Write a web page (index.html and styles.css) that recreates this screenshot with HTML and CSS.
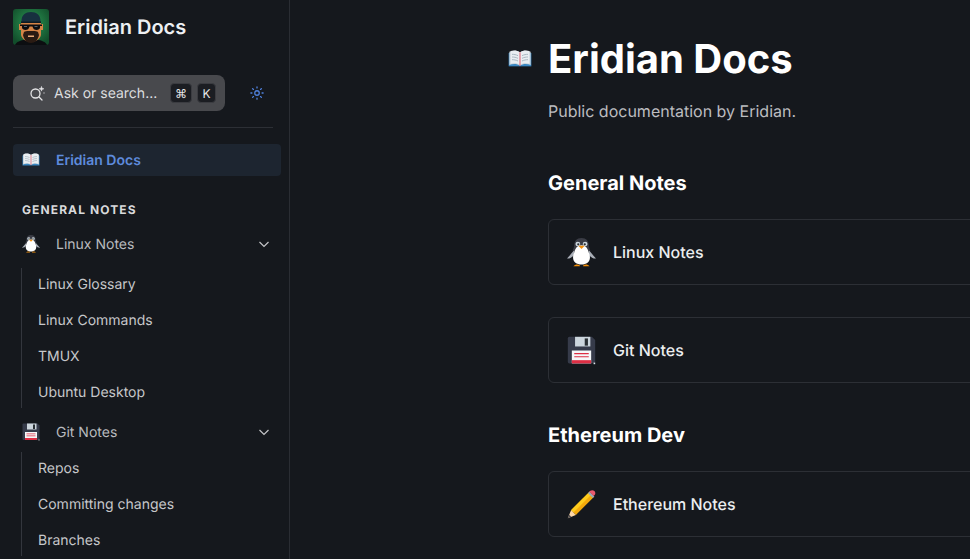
FILE: index.html
```html
<!DOCTYPE html>
<html lang="en">
<head>
  <meta charset="UTF-8" />
  <meta name="viewport" content="width=device-width, initial-scale=1.0" />
  <title>Eridian Docs</title>
  <link rel="stylesheet" href="styles.css">
</head>
<body>
  <svg class="sprites" width="0" height="0" aria-hidden="true">
    <symbol id="book" viewBox="0 0 36 36">
      <path d="M1 9h34v20H1z" fill="#3b88c3"/>
      <path d="M2 7c5-2 12-2 16 1 4-3 11-3 16-1v20c-5-2-12-2-16 1-4-3-11-3-16-1z" fill="#ccd6dd"/>
      <path d="M4 6c5-1.500 10-1 14 2v19c-4-3-9-3.500-14-2zM32 6c-5-1.500-10-1-14 2v19c4-3 9-3.500 14-2z" fill="#e9eef2"/>
      <path d="M6 11c3 0 6 .5 9 2M6 15c3 0 6 .5 9 2M6 19c3 0 6 .5 9 2M30 11c-3 0-6 .5-9 2M30 15c-3 0-6 .5-9 2M30 19c-3 0-6 .5-9 2" stroke="#99aab5" stroke-width="1.200" fill="none"/>
      <path d="M17.300 8h1.400v20h-1.400z" fill="#dd5566"/>
    </symbol>
    <symbol id="penguin" viewBox="0 0 36 36">
      <path d="M9 15C6 19 3 22 0 25.500c2.500.5 6-1.500 9-4.500zM27 15c3 4 6 7 9 10.500-2.500.5-6-1.500-9-4.500z" fill="#a9aeb7"/>
      <path d="M18 0c-6 0-9 4-9 9 0 2-1 4-2 7h22c-1-3-2-5-2-7 0-5-3-9-9-9z" fill="#3a3c45"/>
      <path d="M18 9c-5 0-8 4-9 9-1 2-1.500 4-1.500 6 0 6 4.500 9 10.500 9s10.500-3 10.500-9c0-2-.5-4-1.500-6-1-5-4-9-9-9z" fill="#fff"/>
      <ellipse cx="13.500" cy="7.500" rx="3" ry="2.800" fill="#ccd6dd"/>
      <ellipse cx="22.500" cy="7.500" rx="3" ry="2.800" fill="#ccd6dd"/>
      <circle cx="14" cy="7.800" r="1.400" fill="#292f33"/>
      <circle cx="22" cy="7.800" r="1.400" fill="#292f33"/>
      <path d="M14 9.500h8L18 13.500z" fill="#f4900c"/>
      <path d="M8 35c2-2.500 6-2.500 8-1v1zM28 35c-2-2.500-6-2.500-8-1v1z" fill="#f4900c"/>
    </symbol>
    <symbol id="floppy" viewBox="0 0 36 36">
      <path d="M3 1h28l4 4v28l-5 1H3a2 2 0 0 1-2-2V3a2 2 0 0 1 2-2z" fill="#363b4a"/>
      <path d="M10 1h19v12H10z" fill="#ccd6dd"/>
      <path d="M22 3h4v9h-4z" fill="#292f33"/>
      <path d="M6 18h24v16H6z" fill="#f5f8fa"/>
      <path d="M9 21h18v1.500H9zM9 25h18v1.500H9z" fill="#dd2e44"/>
      <path d="M6 30h24v4H6z" fill="#dd2e44"/>
      <path d="M33 33h2v2h-2z" fill="#e1e8ed"/>
    </symbol>
    <symbol id="pencil" viewBox="0 0 36 36">
      <path d="M5 25 27 3l6 6-22 22z" fill="#f4a90c"/>
      <path d="M5 25 27 3l3 3L8 28z" fill="#ffcc1d"/>
      <path d="m1 35 4-10 6 6z" fill="#ffd8a8"/>
      <path d="m1 35 1.700-4.300 2.600 2.600z" fill="#4a4a50"/>
      <path d="m26 4 2-2 6 6-2 2z" fill="#99aab5"/>
      <path d="M29 1c1.500-1.300 3.700-1 5 .3 1.400 1.400 1.600 3.500.3 5L33 7.500 27.500 2z" fill="#ea596e"/>
    </symbol>
    <radialGradient id="avatar-bg" cx="50%" cy="40%" r="65%">
      <stop offset="0" stop-color="#2c9a55"/>
      <stop offset="1" stop-color="#124d2b"/>
    </radialGradient>
  </svg>

  <aside class="sidebar">
    <div class="brand">
      <svg class="avatar" viewBox="0 0 36 36" aria-label="Eridian logo">
        <rect width="36" height="36" rx="3" fill="url(#avatar-bg)"/>
        <path d="M2 36c1-3 6-5 10-5h12c4 0 9 2 10 5z" fill="#0c0e11"/>
        <path d="M6 15h2v-2h20v2h2v6h-2v5c-1 4-5 7-10 7s-9-3-10-7v-5H6z" fill="#d48446"/>
        <path d="M11 23c2-1.500 5-1 7-1s5-.5 7 1l1 3c-1 5-4 8-8 8s-7-3-8-8z" fill="#2a1b13"/>
        <path d="M15 26.500h6v1.500h-6z" fill="#e8ab78"/>
        <path d="M8.500 12c0-6 4-9 9.500-9s9.500 3 9.500 9l.5 2H8z" fill="#17303f"/>
        <path d="M8 12.500h20V14H8z" fill="#0d1a23"/>
        <path d="M7 15.500h22v1.500h-2v1.500c0 1.500-1.500 2.500-3.500 2.500s-3.500-1-4-3.500h-3c-.5 2.500-2 3.500-4 3.500S9 20 9 18.500V17H7z" fill="#0b0d10"/>
        <path d="M11 17h3v1h-3zM21.500 17h3v1h-3z" fill="#57606a"/>
      </svg>
      <span class="brand-name">Eridian Docs</span>
    </div>

    <div class="tools">
      <button class="search" type="button">
        <svg class="search-icon" viewBox="0 0 16 16" fill="none" stroke="#e4e4e6" stroke-width="1.300">
          <circle cx="6.500" cy="8.500" r="4.500"/>
          <path d="m10 12 3 3" stroke-linecap="round"/>
          <path d="M12.500 1.500c.2 1.500.8 2.100 2.300 2.300-1.500.2-2.100.8-2.300 2.300-.2-1.500-.8-2.100-2.300-2.300 1.500-.2 2.100-.8 2.300-2.300zM15 7.200v1.600" fill="#e4e4e6" stroke-width=".7"/>
        </svg>
        <span class="search-text">Ask or search...</span>
        <span class="key key-cmd">⌘</span>
        <span class="key">K</span>
      </button>
      <svg class="sun" viewBox="0 0 16 16" fill="none" stroke="#4f80dc" stroke-width="1.500" stroke-linecap="round">
        <circle cx="8" cy="8" r="2.600"/>
        <path d="M8 1v1.200M8 13.800V15M1 8h1.200M13.800 8H15M3 3l.9.9M12.100 12.100l.9.9M3 13l.9-.9M12.100 3.900l.9-.9"/>
      </svg>
    </div>

    <hr class="divider">

    <a class="nav-active">
      <svg class="nav-emoji"><use href="#book"/></svg>
      <span>Eridian Docs</span>
    </a>

    <h4 class="nav-heading">General Notes</h4>

    <a class="nav-item">
      <svg class="nav-emoji"><use href="#penguin"/></svg>
      <span class="nav-label">Linux Notes</span>
      <svg class="chevron" viewBox="0 0 12 12" fill="none" stroke="#c4c5c8" stroke-width="1.200"><path d="m1.500 4 4.500 4.500L10.500 4"/></svg>
    </a>
    <div class="sub-list">
      <a>Linux Glossary</a>
      <a>Linux Commands</a>
      <a>TMUX</a>
      <a>Ubuntu Desktop</a>
    </div>

    <a class="nav-item">
      <svg class="nav-emoji"><use href="#floppy"/></svg>
      <span class="nav-label">Git Notes</span>
      <svg class="chevron" viewBox="0 0 12 12" fill="none" stroke="#c4c5c8" stroke-width="1.200"><path d="m1.500 4 4.500 4.500L10.500 4"/></svg>
    </a>
    <div class="sub-list">
      <a>Repos</a>
      <a>Committing changes</a>
      <a>Branches</a>
    </div>
  </aside>

  <main class="content">
    <div class="title-row">
      <svg class="title-emoji"><use href="#book"/></svg>
      <h1>Eridian Docs</h1>
    </div>
    <p class="lead">Public documentation by Eridian.</p>

    <h2>General Notes</h2>
    <a class="card">
      <svg class="card-emoji"><use href="#penguin"/></svg>
      <span>Linux Notes</span>
    </a>
    <a class="card">
      <svg class="card-emoji"><use href="#floppy"/></svg>
      <span>Git Notes</span>
    </a>

    <h2>Ethereum Dev</h2>
    <a class="card">
      <svg class="card-emoji"><use href="#pencil"/></svg>
      <span>Ethereum Notes</span>
    </a>
  </main>
</body>
</html>
```

FILE: styles.css
```css
html, body {
  height: 100%;
}
body {
  margin: 0;
  display: flex;
  overflow: hidden;
  background: #15181d;
  color: #fff;
  font-family: 'Inter', sans-serif;
  text-rendering: geometricPrecision;
}
.sprites {
  position: absolute;
}
.sidebar {
  flex: none;
  box-sizing: border-box;
  width: 290px;
  height: 100%;
  padding: 9px 8px 0 13px;
  border-right: 1px solid #2a2d33;
  overflow: hidden;
}
.brand {
  display: flex;
  align-items: center;
  gap: 16px;
  height: 36px;
}
.avatar {
  width: 36px;
  height: 36px;
}
.brand-name {
  font-size: 20px;
  font-weight: 600;
  color: #edf0f3;
}
.tools {
  display: flex;
  align-items: center;
  margin-top: 30px;
}
.search {
  display: flex;
  align-items: center;
  width: 212px;
  height: 36px;
  padding: 0 9px 0 16px;
  box-sizing: border-box;
  border: none;
  border-radius: 8px;
  background: #48494d;
  color: #dcdddf;
  font-family: inherit;
  font-size: 14px;
  text-rendering: inherit;
}
.search-icon {
  width: 16px;
  height: 16px;
  margin-right: 9px;
}
.search-text {
  flex: 1;
  text-align: left;
}
.key {
  display: flex;
  align-items: center;
  justify-content: center;
  width: 19px;
  height: 20px;
  margin-left: 5px;
  border-radius: 4px;
  border: 1px solid #3b3c41;
  box-sizing: border-box;
  background: #1b1d22;
  color: #e6e6e8;
  font-size: 12px;
}
.key-cmd {
  width: 22px;
}
.sun {
  width: 14px;
  height: 14px;
  margin-left: 25px;
}
.divider {
  width: 260px;
  height: 1px;
  margin: 16px 0;
  border: none;
  background: #2c2f35;
}
.nav-active {
  display: flex;
  align-items: center;
  height: 32px;
  padding-left: 9px;
  border-radius: 4px;
  background: #1d2530;
  color: #5e8bdc;
  font-size: 14px;
  font-weight: 600;
}
.nav-emoji {
  flex: none;
  width: 18px;
  height: 18px;
  margin-right: 16px;
}
.nav-heading {
  margin: 28px 0 12px 9px;
  height: 12px;
  line-height: 12px;
  font-size: 12px;
  font-weight: 700;
  letter-spacing: 1.100px;
  text-transform: uppercase;
  color: #d9dadc;
}
.nav-item {
  display: flex;
  align-items: center;
  height: 32px;
  padding: 0 11px 0 9px;
  color: #b8babe;
  font-size: 14px;
}
.nav-heading + .nav-item {
  margin-bottom: 8px;
}
.sub-list + .nav-item {
  margin: 8px 0 4px;
}
.nav-label {
  flex: 1;
}
.chevron {
  width: 12px;
  height: 12px;
}
.sub-list {
  display: flex;
  flex-direction: column;
  gap: 4px;
  margin-left: 8px;
  border-left: 1px solid #33363d;
}
.sub-list a {
  height: 32px;
  line-height: 34px;
  padding-left: 16px;
  color: #c6c7ca;
  font-size: 14px;
}
.content {
  flex: 1;
  min-width: 0;
  padding: 35px 0 0 258px;
}
.title-row {
  display: flex;
  align-items: center;
  height: 48px;
  margin-left: -40px;
}
.title-emoji {
  flex: none;
  width: 24px;
  height: 24px;
  margin-right: 16px;
}
h1 {
  margin: 0;
  font-size: 40px;
  line-height: 48px;
  font-weight: 700;
  white-space: nowrap;
}
.lead {
  margin: 16px 0 0;
  font-size: 16px;
  line-height: 24px;
  color: #bcbdc0;
  white-space: nowrap;
}
h2 {
  margin: 46px 0 22px;
  font-size: 20px;
  line-height: 28px;
  font-weight: 700;
  white-space: nowrap;
}
.card {
  display: flex;
  align-items: center;
  box-sizing: border-box;
  width: 700px;
  height: 66px;
  margin-bottom: 32px;
  padding-left: 18px;
  border: 1px solid #2c2f35;
  border-radius: 6px;
  font-size: 16px;
  font-weight: 500;
  color: #eceef0;
  white-space: nowrap;
}
.card + h2 {
  margin-top: 38px;
}
.card-emoji {
  flex: none;
  width: 29px;
  height: 29px;
  margin-right: 17px;
}
```
